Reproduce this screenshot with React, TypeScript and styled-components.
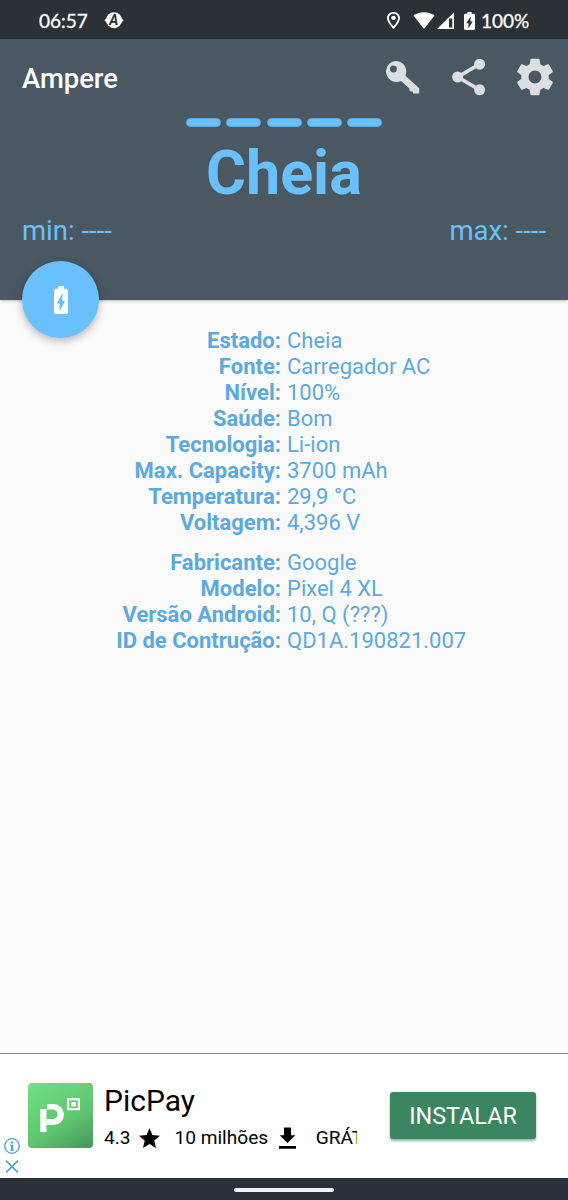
import React from 'react';
import styled, { createGlobalStyle } from 'styled-components';

const GlobalStyle = createGlobalStyle`
  * {
    box-sizing: border-box;
  }

  body {
    margin: 0;
    background: #fafafa;
    font-family: Roboto, 'Liberation Sans', sans-serif;
  }

  svg {
    display: block;
    flex: none;
  }
`;

const Screen = styled.div`
  display: flex;
  flex-direction: column;
  width: 568px;
  height: 1200px;
  overflow: hidden;
  background: #fafafa;
`;
const StatusBar = styled.div`
  display: flex;
  flex: none;
  align-items: center;
  justify-content: space-between;
  height: 39px;
  padding: 2px 39px 0;
  background: #2a3238;
  color: #fff;
`;
const StatusGroup = styled.div`
  display: flex;
  align-items: center;

  svg + span {
    margin-left: 6px;
  }

  span + svg {
    margin-left: 15px;
  }
`;
const StatusText = styled.span<{ $width: number }>`
  width: ${({ $width }) => $width}px;
  font-family: Lato, 'Liberation Sans', sans-serif;
  font-size: 19px;
  line-height: 22px;
  white-space: nowrap;
  -webkit-text-stroke: 0.3px #fff;
`;
const Signals = styled.div`
  margin-right: 10px;
`;
const BadgeLetter = styled.text`
  font: italic bold 14px Roboto, sans-serif;
  fill: #2a3238;
`;
const Header = styled.header`
  display: flex;
  flex: none;
  flex-direction: column;
  height: 261px;
  background: #4a5862;
  color: #6ac0fb;
  box-shadow: 0 1px 3px rgba(0, 0, 0, 0.25);
`;
const Toolbar = styled.div`
  display: flex;
  flex: none;
  align-items: center;
  justify-content: space-between;
  height: 77px;
  padding: 0 11px 0 22px;
`;
const Title = styled.h1`
  margin: 2px 0 0;
  color: #fff;
  font-size: 27.4px;
  font-weight: 500;
  line-height: 30px;
`;
const Actions = styled.div`
  display: flex;
  gap: 22px;
  margin-bottom: 1px;
  color: #dcdfe2;
`;
const Bars = styled.div`
  display: flex;
  justify-content: center;
  gap: 5.3px;
  margin-top: 2px;
`;
const Bar = styled.div`
  width: 35px;
  height: 9px;
  border: 1px solid #58a9e3;
  border-radius: 4.5px;
  background: #6ac0fb;
`;
const Reading = styled.div`
  margin-top: 10px;
  font-size: 61px;
  font-weight: 700;
  line-height: 72px;
  text-align: center;
`;
const Range = styled.div`
  display: flex;
  justify-content: space-between;
  margin-top: 5px;
  padding: 0 22px;
  font-size: 27.5px;
  line-height: 34px;
`;
const Fab = styled.div`
  display: flex;
  flex: none;
  align-items: center;
  justify-content: center;
  width: 77px;
  height: 77px;
  margin: 13px 0 0 22px;
  border-radius: 50%;
  background: #6ac0fb;
  color: #fff;
  box-shadow: 0 3px 8px rgba(0, 0, 0, 0.28);
`;
const Details = styled.main`
  display: flex;
  flex: 1;
  flex-direction: column;
  gap: 14px;
  padding-top: 28px;
`;
const Section = styled.dl`
  display: grid;
  grid-template-columns: 281px 1fr;
  column-gap: 6px;
  margin: 0;
  color: #5ca9e0;
  font-size: 22px;
  line-height: 26px;
`;
const Label = styled.dt`
  font-weight: 700;
  text-align: right;
`;
const Value = styled.dd`
  margin: 0;
`;
const Ad = styled.aside`
  display: flex;
  flex: none;
  height: 125px;
  border-top: 1px solid #8a8a8a;
  background: #fff;
  color: #000;
`;
const AdChoices = styled.div`
  display: flex;
  flex-direction: column;
  justify-content: flex-end;
  gap: 6px;
  width: 28px;
  padding: 0 0 5px 4px;
  color: #45a5cc;
`;
const AdLogo = styled.div`
  width: 65px;
  height: 65px;
  margin-top: 29px;
  border-radius: 4px;
  background: linear-gradient(150deg, #6fde7c 5%, #5fc570 60%, #46935d 100%);
`;
const AdText = styled.div`
  width: 253px;
  margin: 29px 0 0 11px;
  overflow: hidden;
`;
const AdName = styled.div`
  font-size: 30px;
  line-height: 36px;
`;
const AdMeta = styled.div`
  display: flex;
  align-items: center;
  margin-top: 7px;
  font-size: 19.1px;
  line-height: 24px;
  white-space: nowrap;

  svg {
    margin-left: 8px;
  }

  svg + span {
    margin-left: 15px;
  }

  span:last-child {
    margin-left: 17.5px;
  }
`;
const InstallButton = styled.button`
  width: 146px;
  height: 47px;
  margin: 38px 0 0 33px;
  padding: 0;
  border: 0;
  border-radius: 3px;
  background: #3b8561;
  color: #fff;
  font: 400 23.4px Roboto, sans-serif;
  box-shadow: 0 2px 3px rgba(0, 0, 0, 0.35);
`;
const NavBar = styled.div`
  display: flex;
  flex: none;
  justify-content: center;
  height: 22px;
  padding-top: 10px;
  background: #29323a;
`;
const NavHandle = styled.div`
  width: 100px;
  height: 4px;
  border-radius: 2px;
  background: #f2f3f3;
`;

const battery = [
  ['Estado', 'Cheia'],
  ['Fonte', 'Carregador AC'],
  ['Nível', '100%'],
  ['Saúde', 'Bom'],
  ['Tecnologia', 'Li-ion'],
  ['Max. Capacity', '3700 mAh'],
  ['Temperatura', '29,9 °C'],
  ['Voltagem', '4,396 V'],
];

const device = [
  ['Fabricante', 'Google'],
  ['Modelo', 'Pixel 4 XL'],
  ['Versão Android', '10, Q (???)'],
  ['ID de Contrução', 'QD1A.190821.007'],
];

function BatteryIcon({ width, height }: { width: number; height: number }) {
  return (
    <svg width={width} height={height} viewBox='7 2 10 20' preserveAspectRatio='none' fill='currentColor'>
      <path d='M15.67 4H14V2h-4v2H8.33C7.6 4 7 4.6 7 5.33v15.33C7 21.4 7.6 22 8.33 22h7.33c.74 0 1.34-.6 1.34-1.33V5.33C17 4.6 16.4 4 15.67 4zM11 20v-5.5H9L13 7v5.5h2L11 20z' />
    </svg>
  );
}

function InfoList({ rows }: { rows: string[][] }) {
  return (
    <Section>
      {rows.map(([label, value]) => (
        <React.Fragment key={label}>
          <Label>{label}:</Label>
          <Value>{value}</Value>
        </React.Fragment>
      ))}
    </Section>
  );
}

function App() {
  return (
    <Screen>
      <GlobalStyle />
      <StatusBar>
        <StatusGroup>
          <StatusText $width={50}>06:57</StatusText>
          <svg width='20' height='18' viewBox='0 0 20 18'>
            <circle cx='10' cy='8.2' r='8' fill='#fff' />
            <path d='M0.3 8.2L4 5v6.4zM19.7 8.2L16 5v6.4z' fill='#fff' />
            <BadgeLetter x='9.7' y='13.2' textAnchor='middle'>
              A
            </BadgeLetter>
          </svg>
        </StatusGroup>
        <StatusGroup>
          <svg width='13' height='17' viewBox='5 2 14 20' preserveAspectRatio='none' fill='currentColor'>
            <path d='M12 2C8.13 2 5 5.13 5 9c0 5.25 7 13 7 13s7-7.75 7-13c0-3.87-3.13-7-7-7zM7 9c0-2.76 2.24-5 5-5s5 2.24 5 5c0 2.88-2.88 7.19-5 9.88C9.92 16.21 7 11.85 7 9z' />
            <circle cx='12' cy='9' r='2.5' />
          </svg>
          <Signals>
            <svg width='54' height='18' viewBox='0 0 54 18' fill='currentColor'>
              <path d='M13.5 3.6C16 1.8 20 0.2 24 0.2s8 1.6 10.5 3.4L24 17z' />
              <path fillRule='evenodd' d='M54 0.2v16.8H37zM49 6.5v9h3.3v-9z' />
            </svg>
          </Signals>
          <BatteryIcon width={11} height={18} />
          <StatusText $width={48}>100%</StatusText>
        </StatusGroup>
      </StatusBar>

      <Header>
        <Toolbar>
          <Title>Ampere</Title>
          <Actions>
            <svg width='44' height='44' viewBox='0.6 0 44 44' fill='currentColor'>
              <path
                fillRule='evenodd'
                d='M16 6a10.5 10.5 0 1 0 4.6 20l8.3 7.4.4 2.9 3 .2.5 2.1h6v-5.4L25 20.8A10.5 10.5 0 0 0 16 6zM13 10.5a3.5 3.5 0 1 1 0 7 3.5 3.5 0 0 1 0-7z'
              />
            </svg>
            <svg width='44' height='44' viewBox='0.2 0 24 24' fill='currentColor' stroke='currentColor'>
              <path d='M18 5L6 12l12 7' fill='none' strokeWidth='2' />
              <g stroke='none'>
                <circle cx='18' cy='5' r='3' />
                <circle cx='6' cy='12' r='3' />
                <circle cx='18' cy='19' r='3' />
              </g>
            </svg>
            <svg width='44' height='44' viewBox='0 0 24 24' fill='currentColor'>
              <path d='M19.43 12.98c.04-.32.07-.64.07-.98s-.03-.66-.07-.98l2.11-1.65c.19-.15.24-.42.12-.64l-2-3.46c-.12-.22-.39-.3-.61-.22l-2.49 1c-.52-.4-1.08-.73-1.69-.98l-.38-2.65C14.46 2.18 14.25 2 14 2h-4c-.25 0-.46.18-.49.42l-.38 2.65c-.61.25-1.17.59-1.69.98l-2.49-1c-.23-.09-.49 0-.61.22l-2 3.46c-.13.22-.07.49.12.64l2.11 1.65c-.04.32-.07.65-.07.98s.03.66.07.98l-2.11 1.65c-.19.15-.24.42-.12.64l2 3.46c.12.22.39.3.61.22l2.49-1c.52.4 1.08.73 1.69.98l.38 2.65c.03.24.24.42.49.42h4c.25 0 .46-.18.49-.42l.38-2.65c.61-.25 1.17-.59 1.69-.98l2.49 1c.23.09.49 0 .61-.22l2-3.46c.12-.22.07-.49-.12-.64l-2.11-1.65zM12 15.5c-1.93 0-3.5-1.57-3.5-3.5s1.57-3.5 3.5-3.5 3.5 1.57 3.5 3.5-1.57 3.5-3.5 3.5z' />
            </svg>
          </Actions>
        </Toolbar>
        <Bars>
          {[0, 1, 2, 3, 4].map((n) => (
            <Bar key={n} />
          ))}
        </Bars>
        <Reading>Cheia</Reading>
        <Range>
          <span>min: ----</span>
          <span>max: ----</span>
        </Range>
        <Fab>
          <BatteryIcon width={14} height={28} />
        </Fab>
      </Header>

      <Details>
        <InfoList rows={battery} />
        <InfoList rows={device} />
      </Details>

      <Ad>
        <AdChoices>
          <svg width='16' height='16' viewBox='0 0 16 16' fill='currentColor'>
            <circle cx='8' cy='8' r='7.3' fill='none' stroke='currentColor' strokeWidth='1.3' />
            <path d='M7 3.5h2.2v2H7zM6 6.7h3.2v5H10v1H6v-1h1v-4H6z' />
          </svg>
          <svg width='16' height='13' viewBox='0 0 16 13' stroke='currentColor' strokeWidth='1.7'>
            <path d='M2 0.7l12 11.8M14 0.7L2 12.5' />
          </svg>
        </AdChoices>
        <AdLogo>
          <svg width='65' height='65' viewBox='0 0 65 65' fill='#fff'>
            <path d='M12.3 26h6.2v23h-6.2z' />
            <path d='M19 21h6.5a10.5 10.5 0 0 1 0 21H18.5v-6h6.5a4.7 4.7 0 0 0 0-9.4h-6z' />
            <path fillRule='evenodd' d='M39 15h13v12.3H39zM41.2 17.2v7.9h8.6v-7.9z' />
            <path d='M43.3 19h4.6v4.4h-4.6z' />
          </svg>
        </AdLogo>
        <AdText>
          <AdName>PicPay</AdName>
          <AdMeta>
            <span>4.3</span>
            <svg width='21' height='20' viewBox='2 2 20 19' fill='currentColor'>
              <path d='M12 17.27L18.18 21l-1.64-7.03L22 9.24l-7.19-.61L12 2 9.19 8.63 2 9.24l5.46 4.73L5.82 21z' />
            </svg>
            <span>10 milhões</span>
            <svg width='22' height='22' viewBox='0 0 22 22' fill='currentColor'>
              <path d='M8 0.5h7v7.7h4.3L11.5 16 3.7 8.2H8zM3 19h17v2.7H3z' />
            </svg>
            <span>GRÁT</span>
          </AdMeta>
        </AdText>
        <InstallButton>INSTALAR</InstallButton>
      </Ad>
      <NavBar>
        <NavHandle />
      </NavBar>
    </Screen>
  );
}

export default App;
